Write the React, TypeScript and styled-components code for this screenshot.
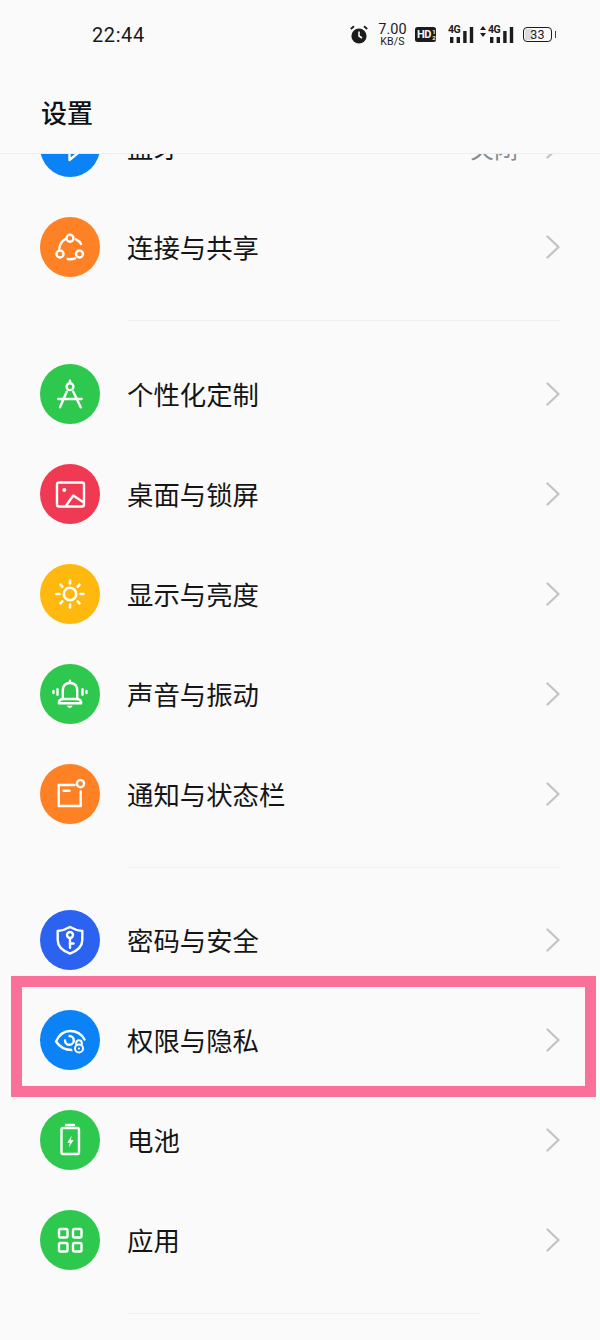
import React from "react";
import styled, { createGlobalStyle } from "styled-components";

const Global = createGlobalStyle`
  html, body { margin: 0; padding: 0; background: #fafafa; }
  body { font-family: "Noto Sans CJK SC", "Liberation Sans", sans-serif; }
`;

const Page = styled.div`
  width: 600px;
  height: 1340px;
  background: #fafafa;
  overflow: hidden;
  display: flex;
  flex-direction: column;
  color: #111;
`;

const Header = styled.header`
  flex: none;
  height: 153px;
  border-bottom: 1px solid #eeeeee;
  display: flex;
  flex-direction: column;
  background: #fafafa;
  position: relative;
  z-index: 1;
`;

const StatusBar = styled.div`
  height: 69px;
  display: flex;
  align-items: center;
  padding: 0 44px 0 92px;
  justify-content: space-between;
`;

const Clock = styled.span`
  font-family: Roboto, sans-serif;
  font-size: 20px;
  letter-spacing: 0.6px;
  color: #1a1a1a;
`;

const StatusIcons = styled.div`
  display: flex;
  align-items: center;
  gap: 9px;
  color: #1c1c1c;
`;

const AlarmIcon = styled.svg`
  flex: none;
  width: 18px;
  height: 19px;
  margin-right: 2px;
`;

const Speed = styled.div`
  display: flex;
  flex-direction: column;
  align-items: center;
  font-family: Roboto, sans-serif;
  width: 27px;
  padding-top: 1px;
`;

const SpeedValue = styled.span`
  font-size: 14.5px;
  line-height: 12px;
  letter-spacing: 0.1px;
`;

const SpeedUnit = styled.span`
  font-size: 10.5px;
  line-height: 9px;
  margin-top: 1px;
  letter-spacing: 0.2px;
`;

const HdBadge = styled.span`
  display: flex;
  align-items: center;
  justify-content: flex-start;
  padding-left: 2px;
  box-sizing: border-box;
  width: 21px;
  height: 15px;
  background: #1c1c1c;
  border-radius: 2.5px;
  color: #fafafa;
  font-family: Roboto, sans-serif;
  font-weight: 700;
  font-size: 11px;
  letter-spacing: -0.4px;
  line-height: 1;
`;

const SimSlots = styled.span`
  display: flex;
  flex-direction: column;
  font-size: 6px;
  line-height: 6px;
  margin-left: 1px;
`;

const SignalWrap = styled.span`
  position: relative;
  display: block;
  flex: none;
  width: ${p => p.$w}px;
  height: 18px;
  margin-left: ${p => p.$m}px;
`;

const SignalLabel = styled.span`
  position: absolute;
  top: -1px;
  left: ${p => p.$l}px;
  font-family: Roboto, sans-serif;
  font-size: 10.5px;
  line-height: 10px;
  font-weight: 700;
  letter-spacing: -0.4px;
`;

const Battery = styled.span`
  display: flex;
  align-items: center;
  justify-content: center;
  box-sizing: border-box;
  width: 29px;
  height: 15px;
  border: 1.5px solid #1c1c1c;
  border-radius: 4px;
  font-family: Roboto, sans-serif;
  font-size: 12.5px;
  position: relative;
  margin: 0 4px 0 1px;
  letter-spacing: 0.3px;
  &::before {
    content: "";
    position: absolute;
    left: 1px;
    top: 1px;
    bottom: 1px;
    width: 8px;
    background: #dcdcdc;
    border-radius: 1.5px;
  }
  &::after {
    content: "";
    position: absolute;
    right: -5px;
    top: 2.5px;
    width: 1.5px;
    height: 7px;
    background: #444;
  }
`;

const BatteryValue = styled.span`
  position: relative;
`;

const Title = styled.h1`
  margin: 0;
  padding: 0 0 0 41px;
  font-size: 26px;
  font-weight: 500;
  line-height: 38px;
  margin-top: 24px;
  color: #111;
`;

const List = styled.main`
  flex: 1;
  overflow: hidden;
  min-height: 0;
`;

const Scroller = styled.div`
  margin-top: -57px;
`;

const Row = styled.div`
  position: relative;
  height: 100px;
  display: flex;
  align-items: center;
  padding: 0 40px;
`;

const Circle = styled.span`
  flex: none;
  width: 60px;
  height: 60px;
  border-radius: 50%;
  background: ${p => p.$c};
  display: flex;
  align-items: center;
  justify-content: center;
  color: #fff;
`;

const Label = styled.span`
  flex: 1;
  margin-left: 27px;
  font-size: 26.4px;
  line-height: 36px;
  color: #151515;
`;

const Value = styled.span`
  font-size: 24px;
  color: #8a8a8a;
  margin-right: 28px;
`;

const Chevron = styled.svg`
  flex: none;
  width: 14px;
  height: 24px;
`;

const Separator = styled.div`
  height: ${p => p.$h}px;
  display: flex;
  align-items: center;
  padding-left: 127px;
  padding-right: ${p => p.$r}px;
  &::before {
    content: "";
    flex: 1;
    height: 1px;
    background: #efefef;
  }
`;

const Highlight = styled.div`
  position: absolute;
  left: 11px;
  right: 4px;
  top: -14px;
  bottom: -7px;
  border: 11px solid #fb7099;
  box-sizing: border-box;
  pointer-events: none;
`;

const Icon = ({ children }: { children: React.ReactNode }) => (
  <svg width="40" height="40" viewBox="0 0 40 40" fill="none" stroke="#fff" strokeWidth="2.4" strokeLinecap="round" strokeLinejoin="round">
    {children}
  </svg>
);

const Arrow = () => (
  <Chevron viewBox="0 0 14 24" fill="none">
    <path d="M1.5 1.5 L12.5 12 L1.5 22.5" stroke="#c4c4c4" strokeWidth="2.4" strokeLinecap="round" strokeLinejoin="round" />
  </Chevron>
);

const icons = {
  bluetooth: (
    <Icon><path d="M12 14 L28 26 L19.5 33 V7 L28 14 L12 25" /></Icon>
  ),
  share: (
    <Icon>
      <circle cx="20" cy="11.3" r="3.5" />
      <circle cx="10" cy="27" r="3.5" />
      <circle cx="29.5" cy="27" r="3.5" />
      <path d="M15 12.3 Q10 15.5 9.3 21.3" />
      <path d="M26 12.3 Q29.5 14 31 17" />
      <path d="M17.7 32 Q21.5 32.6 25 31.3" />
    </Icon>
  ),
  compass: (
    <Icon>
      <circle cx="20" cy="12.7" r="3.4" />
      <path d="M20 6.7 V8.6" />
      <path d="M16.7 17.7 L10 33.3" />
      <path d="M23.3 17.7 L30.7 33.3" />
      <path d="M8.3 25 H31.7" />
    </Icon>
  ),
  wallpaper: (
    <Icon>
      <rect x="7" y="8.5" width="27" height="24" rx="2" />
      <circle cx="14.3" cy="16" r="2" fill="#fff" stroke="none" />
      <path d="M16 31.7 L23.3 21.5 L33 28" />
    </Icon>
  ),
  sun: (
    <Icon>
      <circle cx="20" cy="20" r="6.2" strokeWidth="2.6" />
      <g strokeWidth="2.6">
        <path d="M20 6.5 V9.5" /><path d="M20 30.5 V33.5" />
        <path d="M6.5 20 H9.5" /><path d="M30.5 20 H33.5" />
        <path d="M10.5 10.7 L12.3 12.7" /><path d="M27.7 27.3 L29.5 29.3" />
        <path d="M10.5 29.3 L12.3 27.3" /><path d="M27.7 12.7 L29.5 10.7" />
      </g>
    </Icon>
  ),
  bell: (
    <Icon>
      <path d="M12.8 25 V16.5 Q12.8 9 20 9 Q27.2 9 27.2 16.5 V25" />
      <path d="M20 6.8 V8" />
      <path d="M8.8 29.3 Q8.8 25.5 12.8 25 H27.2 Q31.2 25.5 31.2 29.3 Z" />
      <path d="M17.8 32.2 H22.2 L20 33.6 Z" fill="#fff" strokeWidth="1" />
      <path d="M3.5 17 V19" /><path d="M7.5 15.2 V20.8" />
      <path d="M32.5 15.2 V20.8" /><path d="M36.5 17 V19" />
    </Icon>
  ),
  notice: (
    <Icon>
      <path d="M24.5 11 H8.7 V32 H30.7 V17.5" />
      <path d="M13.5 16.7 H19.5" />
      <circle cx="30.5" cy="9.7" r="3.6" />
    </Icon>
  ),
  shield: (
    <Icon>
      <path d="M20 7 Q26 10.5 32.3 11 V20 Q32.3 29 20 33.6 Q7.7 29 7.7 20 V11 Q14 10.5 20 7 Z" />
      <circle cx="20" cy="15" r="3" />
      <path d="M20 18.2 V27.8" />
      <path d="M20 23.5 H23.5" />
    </Icon>
  ),
  eye: (
    <Icon>
      <path d="M23 30 Q12 30.5 6 21.5 Q11 11 20 11 Q30 11 34.5 19.5" />
      <path d="M15 20.5 A4.4 4.4 0 1 0 19.5 16" />
      <circle cx="29" cy="28.5" r="7" fill="#0b82f6" stroke="none" />
      <path d="M26.2 24.5 V23 A2.8 2.8 0 0 1 31.8 23 V24.5" strokeWidth="2" />
      <circle cx="29" cy="28.5" r="4" strokeWidth="2" />
      <circle cx="29" cy="28.5" r="1.1" fill="#fff" stroke="none" />
    </Icon>
  ),
  battery: (
    <Icon>
      <path d="M16 5 H24" strokeWidth="2.4" />
      <rect x="11.5" y="8" width="17.5" height="26" rx="1.5" />
      <path d="M21.7 15.5 L17.4 22.8 H20 L18.7 27.5 L23.6 20 H20.8 Z" fill="#fff" stroke="none" />
    </Icon>
  ),
  apps: (
    <Icon>
      <rect x="9" y="9" width="8.5" height="8.5" rx="1.5" />
      <rect x="23" y="9" width="8.5" height="8.5" rx="1.5" />
      <rect x="9" y="23" width="8.5" height="8.5" rx="1.5" />
      <rect x="23" y="23" width="8.5" height="8.5" rx="1.5" />
    </Icon>
  ),
};

type Item = { k: keyof typeof icons; c: string; t: string; v?: string; hl?: boolean };

const groups: { items: Item[]; r: number; h: number }[] = [
  {
    r: 40,
    h: 47,
    items: [
      { k: "bluetooth", c: "#0b82f6", t: "蓝牙", v: "关闭" },
      { k: "share", c: "#ff8126", t: "连接与共享" },
    ],
  },
  {
    r: 40,
    h: 46,
    items: [
      { k: "compass", c: "#2dc84d", t: "个性化定制" },
      { k: "wallpaper", c: "#f03a54", t: "桌面与锁屏" },
      { k: "sun", c: "#ffb80d", t: "显示与亮度" },
      { k: "bell", c: "#2dc84d", t: "声音与振动" },
      { k: "notice", c: "#ff8126", t: "通知与状态栏" },
    ],
  },
  {
    r: 120,
    h: 47,
    items: [
      { k: "shield", c: "#2b62f0", t: "密码与安全" },
      { k: "eye", c: "#0b82f6", t: "权限与隐私", hl: true },
      { k: "battery", c: "#2dc84d", t: "电池" },
      { k: "apps", c: "#2dc84d", t: "应用" },
    ],
  },
];

const Bars = ({ x }: { x: number }) => (
  <svg style={{ position: "absolute", left: x, top: 0 }} width="24" height="18" viewBox="0 0 24 18" fill="#1c1c1c">
    <rect x="0" y="11" width="3.4" height="6" />
    <rect x="6.6" y="11" width="3.4" height="6" />
    <rect x="13.2" y="5" width="3.4" height="12" />
    <rect x="19.8" y="1" width="3.4" height="16" />
  </svg>
);

export default function App() {
  return (
    <Page>
      <Global />
      <Header>
        <StatusBar>
          <Clock>22:44</Clock>
          <StatusIcons>
            <AlarmIcon viewBox="0 0 18 19">
              <circle cx="9" cy="11" r="7.6" fill="#1c1c1c" />
              <path d="M9 6.5 V11 L12 13" stroke="#fafafa" strokeWidth="1.6" fill="none" />
              <path d="M0.8 4 L4 1.2 M17.2 4 L14 1.2" stroke="#1c1c1c" strokeWidth="1.8" fill="none" />
            </AlarmIcon>
            <Speed>
              <SpeedValue>7.00</SpeedValue>
              <SpeedUnit>KB/S</SpeedUnit>
            </Speed>
            <HdBadge>HD<SimSlots><span>1</span><span>2</span></SimSlots></HdBadge>
            <SignalWrap $w={25} $m={3}>
              <SignalLabel $l={0}>4G</SignalLabel>
              <Bars x={2} />
            </SignalWrap>
            <SignalWrap $w={33} $m={-2}>
              <SignalLabel $l={8}>4G</SignalLabel>
              <svg style={{ position: "absolute", left: 0, top: 0 }} width="6" height="11" viewBox="0 0 6 11" fill="#1c1c1c">
                <path d="M3 0 L6 4 H0 Z M3 11 L0 7 H6 Z" />
              </svg>
              <Bars x={10} />
            </SignalWrap>
            <Battery><BatteryValue>33</BatteryValue></Battery>
          </StatusIcons>
        </StatusBar>
        <Title>设置</Title>
      </Header>
      <List>
        <Scroller>
          {groups.map((g, i) => (
            <React.Fragment key={i}>
              {g.items.map(it => (
                <Row key={it.t}>
                  <Circle $c={it.c}>{icons[it.k]}</Circle>
                  <Label>{it.t}</Label>
                  {it.v && <Value>{it.v}</Value>}
                  <Arrow />
                  {it.hl && <Highlight />}
                </Row>
              ))}
              <Separator $r={g.r} $h={g.h} />
            </React.Fragment>
          ))}
        </Scroller>
      </List>
    </Page>
  );
}
